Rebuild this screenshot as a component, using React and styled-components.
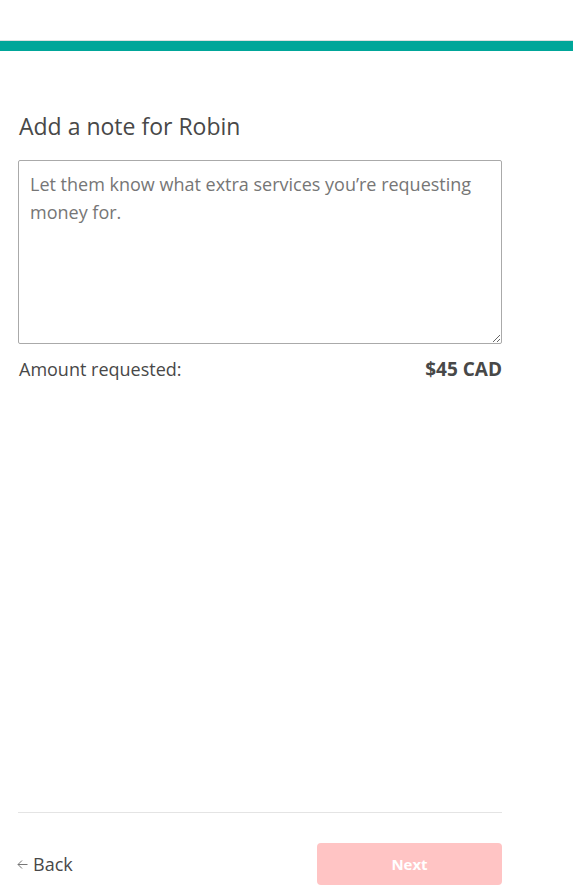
import React from "react";
import styled, { createGlobalStyle } from "styled-components";

const Global = createGlobalStyle`
  html, body { margin: 0; padding: 0; background: #fff; }
  body { font-family: "Open Sans", "Liberation Sans", sans-serif; color: #484848; }
  * { box-sizing: border-box; }
`;

const Page = styled.div`
  height: 896px;
  display: flex;
  flex-direction: column;
  overflow: hidden;
`;

const Header = styled.div`
  height: 41px;
  border-bottom: 1px solid #dce0e0;
`;

const Progress = styled.div`
  height: 10px;
  background: #00a699;
`;

const Content = styled.main`
  flex: 1;
  width: 484px;
  margin-left: 18px;
  padding-top: 60px;
  display: flex;
  flex-direction: column;
`;

const Title = styled.h1`
  margin: 0 0 19px 1px;
  font-size: 23px;
  font-weight: 400;
  line-height: 30px;
  color: #484848;
`;

const NoteField = styled.textarea`
  display: block;
  width: 484px;
  height: 184px;
  border: 1px solid #aaaaaa;
  border-radius: 2px;
  padding: 9px 11px;
  font-family: inherit;
  font-size: 18px;
  line-height: 28px;
  color: #484848;
  resize: vertical;
  outline: none;
  &::placeholder { color: #767676; }
`;

const AmountRow = styled.div`
  display: flex;
  justify-content: space-between;
  align-items: center;
  margin-top: 13px;
  font-size: 18px;
  line-height: 24px;
  padding-left: 1px;
`;

const Amount = styled.span`
  font-weight: 700;
  font-size: 19px;
`;

const Footer = styled.footer`
  width: 484px;
  margin-left: 18px;
  border-top: 1px solid #e4e4e4;
  padding: 30px 0 11px;
  display: flex;
  justify-content: space-between;
  align-items: center;
`;

const BackLink = styled.a`
  display: flex;
  align-items: center;
  gap: 5px;
  font-size: 18px;
  color: #484848;
  text-decoration: none;
  cursor: pointer;
  margin-left: -1px;
`;

const Arrow = styled.svg`
  width: 11px;
  height: 11px;
  flex: none;
`;

const NextButton = styled.button`
  width: 185px;
  height: 42px;
  border: none;
  border-radius: 4px;
  background: #ffc4c4;
  color: #fff;
  font-family: inherit;
  font-size: 15px;
  font-weight: 700;
  cursor: default;
`;

export default function App() {
  return (
    <>
      <Global />
      <Page>
        <Header />
        <Progress />
        <Content>
          <Title>Add a note for Robin</Title>
          <NoteField placeholder="Let them know what extra services you’re requesting money for." />
          <AmountRow>
            <span>Amount requested:</span>
            <Amount>$45 CAD</Amount>
          </AmountRow>
        </Content>
        <Footer>
          <BackLink>
            <Arrow viewBox="0 0 11 11" fill="none" stroke="#767676" strokeWidth="1">
              <path d="M10.5 5.5H1M5 1.5L1 5.5L5 9.5" />
            </Arrow>
            Back
          </BackLink>
          <NextButton disabled>Next</NextButton>
        </Footer>
      </Page>
    </>
  );
}
